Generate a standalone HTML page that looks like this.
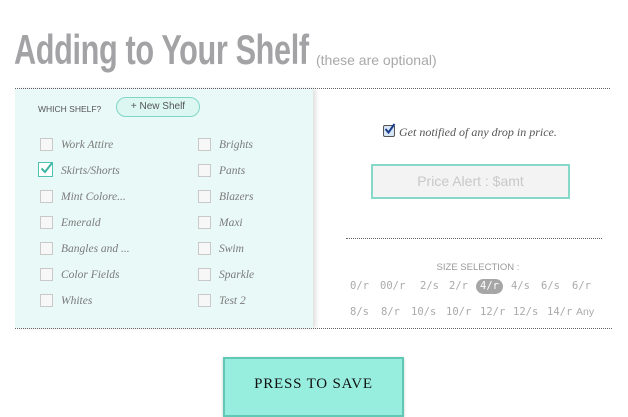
<!DOCTYPE html>
<html><head><style>
body{margin:0;width:628px;height:411px;overflow:hidden;background:#fff;font-family:"Liberation Sans",sans-serif;position:relative}
.a{position:absolute}
.title{left:14px;top:26px;font-size:42px;font-weight:bold;color:#a3a3a6;white-space:nowrap;transform:scaleX(0.73);transform-origin:left top;letter-spacing:-0.5px}
.opt{left:316px;top:52px;font-size:14px;color:#a8a8a8;white-space:nowrap}
.dot{border-top:1px dotted #666;height:0}
.panel{left:15px;top:89px;width:298px;height:239px;background:#e9f9f7;box-shadow:3px 0 4px rgba(0,0,0,0.12)}
.cb{width:11px;height:11px;border:1px solid #c9c9c9;background:#f7f7f7}
.lbl{font-family:"Liberation Serif",serif;font-style:italic;font-size:11.5px;color:#7a7a7a;white-space:nowrap}
.sz{font-family:"DejaVu Sans Mono",monospace;font-size:10.5px;color:#aaa;white-space:nowrap}
</style></head><body>
<div class="a title">Adding to Your Shelf</div>
<div class="a opt">(these are optional)</div>
<div class="a dot" style="left:15px;top:88px;width:595px"></div>
<div class="a panel"></div>
<div class="a" style="left:38px;top:104px;font-size:8.5px;color:#555">WHICH SHELF?</div>
<div class="a" style="left:116px;top:97px;width:84px;height:20px;border:1px solid #7fd6c6;border-radius:11px;background:#dcf7f2;box-sizing:border-box;font-size:10px;color:#555;text-align:center;line-height:18px">+ New Shelf</div>

<div class="a cb" style="left:40px;top:138px"></div><div class="a lbl" style="left:61px;top:139px">Work Attire</div>
<div class="a cb" style="left:38px;top:162px;width:13px;height:13px;border:1px solid #4fc3b1;background:#fff"></div>
<svg class="a" style="left:40px;top:162px" width="13" height="12"><path d="M1.5 6.5 L5 10 L12 1" stroke="#3fb5a3" stroke-width="2" fill="none"/></svg>
<div class="a lbl" style="left:61px;top:165px">Skirts/Shorts</div>
<div class="a cb" style="left:40px;top:190px"></div><div class="a lbl" style="left:61px;top:191px">Mint Colore...</div>
<div class="a cb" style="left:40px;top:216px"></div><div class="a lbl" style="left:61px;top:217px">Emerald</div>
<div class="a cb" style="left:40px;top:242px"></div><div class="a lbl" style="left:61px;top:243px">Bangles and ...</div>
<div class="a cb" style="left:40px;top:268px"></div><div class="a lbl" style="left:61px;top:269px">Color Fields</div>
<div class="a cb" style="left:40px;top:294px"></div><div class="a lbl" style="left:61px;top:295px">Whites</div>

<div class="a cb" style="left:198px;top:138px"></div><div class="a lbl" style="left:219px;top:139px">Brights</div>
<div class="a cb" style="left:198px;top:164px"></div><div class="a lbl" style="left:219px;top:165px">Pants</div>
<div class="a cb" style="left:198px;top:190px"></div><div class="a lbl" style="left:219px;top:191px">Blazers</div>
<div class="a cb" style="left:198px;top:216px"></div><div class="a lbl" style="left:219px;top:217px">Maxi</div>
<div class="a cb" style="left:198px;top:242px"></div><div class="a lbl" style="left:219px;top:243px">Swim</div>
<div class="a cb" style="left:198px;top:268px"></div><div class="a lbl" style="left:219px;top:269px">Sparkle</div>
<div class="a cb" style="left:198px;top:294px"></div><div class="a lbl" style="left:219px;top:295px">Test 2</div>

<div class="a" style="left:383px;top:125px;width:10px;height:10px;border:1px solid #555;background:#d7e6f7;border-radius:2px"></div>
<svg class="a" style="left:384px;top:123px" width="12" height="12"><path d="M1.5 6 L4.5 9.5 L10.5 1" stroke="#1a3d8a" stroke-width="2" fill="none"/></svg>
<div class="a lbl" style="left:399px;top:125px;color:#555;font-size:12px">Get notified of any drop in price.</div>
<div class="a" style="left:371px;top:164px;width:199px;height:35px;border:2px solid #86d8c9;background:#f3f3f3;box-sizing:border-box;text-align:center;line-height:31px;font-size:14px;color:#c8c8c8">Price Alert : $amt</div>
<div class="a dot" style="left:346px;top:238px;width:256px"></div>
<div class="a" style="left:346px;top:262px;width:264px;text-align:center;font-size:9.5px;color:#999">SIZE SELECTION :</div>
<div class="a" style="left:476px;top:279px;width:27px;height:15px;border-radius:8px;background:#a6a6a6"></div>
<div class="a sz" style="left:350px;top:280px">0/r</div>
<div class="a sz" style="left:380px;top:280px">00/r</div>
<div class="a sz" style="left:420px;top:280px">2/s</div>
<div class="a sz" style="left:449px;top:280px">2/r</div>
<div class="a sz" style="left:480px;top:280px;color:#fff">4/r</div>
<div class="a sz" style="left:511px;top:280px">4/s</div>
<div class="a sz" style="left:541px;top:280px">6/s</div>
<div class="a sz" style="left:572px;top:280px">6/r</div>
<div class="a sz" style="left:350px;top:306px">8/s</div>
<div class="a sz" style="left:381px;top:306px">8/r</div>
<div class="a sz" style="left:411px;top:306px">10/s</div>
<div class="a sz" style="left:446px;top:306px">10/r</div>
<div class="a sz" style="left:480px;top:306px">12/r</div>
<div class="a sz" style="left:513px;top:306px">12/s</div>
<div class="a sz" style="left:547px;top:306px">14/r</div>
<div class="a sz" style="left:576px;top:306px;font-family:'Liberation Sans',sans-serif">Any</div>
<div class="a dot" style="left:15px;top:328px;width:597px"></div>

<div class="a" style="left:223px;top:357px;width:181px;height:60px;background:#97eedf;border:2px solid #62c8b6;box-sizing:border-box;box-shadow:0 1px 3px rgba(0,0,0,0.2);text-align:center;padding-top:17px;font-family:'Liberation Serif',serif;font-size:15px;letter-spacing:0.8px;color:#111">PRESS TO SAVE</div>
</body></html>
